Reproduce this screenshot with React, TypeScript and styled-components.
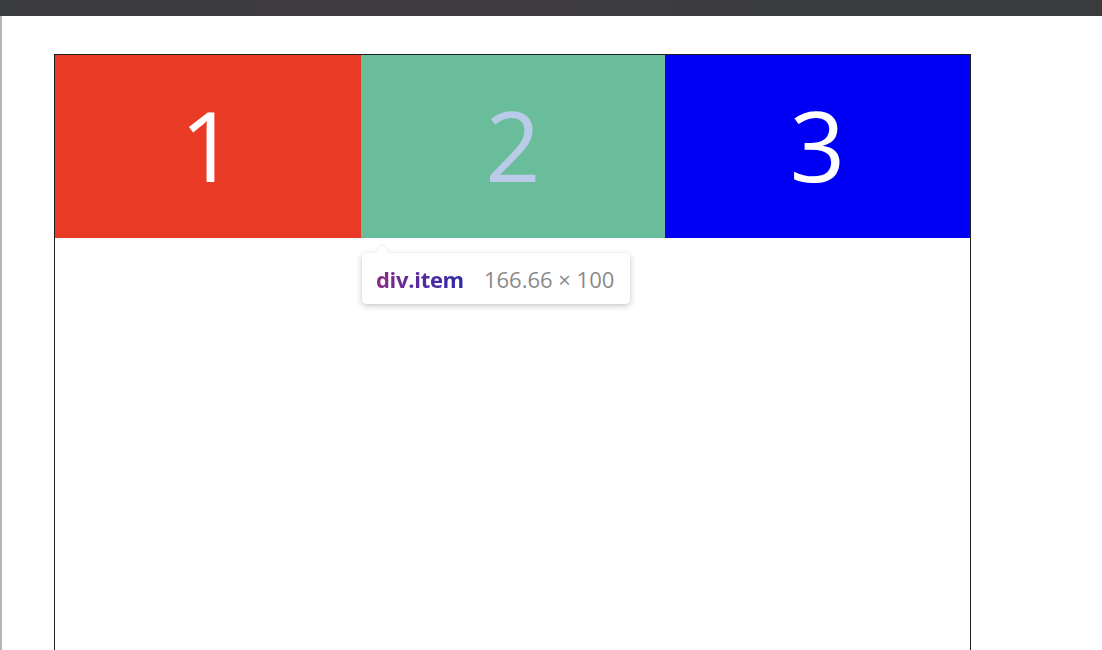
import React from "react";
import styled, { createGlobalStyle } from "styled-components";

const Global = createGlobalStyle`
  html, body { margin: 0; padding: 0; background: #ffffff; }
  body { font-family: "Open Sans", "Noto Sans", sans-serif; overflow: hidden; }
`;

const Page = styled.div`
  width: 1102px;
  height: 650px;
  display: flex;
  flex-direction: column;
  background: #ffffff;
`;

const TopBar = styled.div`
  height: 16px;
  flex: none;
  background: linear-gradient(90deg, #3a3b3d 0%, #403c40 40%, #3b3c3e 70%, #3a3b3c 100%);
  box-shadow: 0 1px 1px rgba(0, 0, 0, 0.25);
`;

const Viewport = styled.div`
  flex: 1;
  position: relative;
  border-left: 2px solid #b4b4b8;
  padding: 38px 0 0 52px;
  background: #ffffff;
`;

const Container = styled.div`
  width: 915px;
  height: 620px;
  border: 1px solid #1e1e1e;
  display: flex;
  align-items: flex-start;
`;

const Item = styled.div<{ $bg: string; $fg: string; $w: number }>`
  width: ${(p) => p.$w}px;
  height: 183px;
  flex: none;
  background: ${(p) => p.$bg};
  color: ${(p) => p.$fg};
  display: flex;
  align-items: center;
  justify-content: center;
  font-family: "Open Sans", "Noto Sans", sans-serif;
  font-size: 97px;
  font-weight: 400;
  line-height: 1;
  padding-bottom: 4px;
  box-sizing: border-box;
`;

const Tooltip = styled.div`
  position: absolute;
  left: 360px;
  top: 237px;
  height: 51px;
  padding: 0 16px 0 14px;
  display: flex;
  align-items: center;
  gap: 20px;
  background: #ffffff;
  border-radius: 4px;
  box-shadow: 0 2px 6px rgba(0, 0, 0, 0.22), 0 0 1px rgba(0, 0, 0, 0.15);
  font-family: "Open Sans", "Noto Sans", sans-serif;
  font-size: 22px;
  &::before {
    content: "";
    position: absolute;
    left: 12px;
    top: -8px;
    width: 0;
    height: 0;
    border-left: 8px solid transparent;
    border-right: 8px solid transparent;
    border-bottom: 8px solid #ffffff;
    filter: drop-shadow(0 -1px 1px rgba(0, 0, 0, 0.08));
  }
`;

const TagName = styled.span`
  font-weight: 700;
  letter-spacing: -0.3px;
  background: linear-gradient(90deg, #8a2a86 0%, #5b2a9c 45%, #2c2aa8 100%);
  -webkit-background-clip: text;
  background-clip: text;
  color: transparent;
`;

const Dims = styled.span`
  color: #8a8a8a;
`;

export default function App() {
  return (
    <Page>
      <Global />
      <TopBar />
      <Viewport>
        <Container>
          <Item $bg="#e83a24" $fg="#ffffff" $w={306}>1</Item>
          <Item $bg="#69bd9b" $fg="#b9cbe8" $w={304}>2</Item>
          <Item $bg="#0000f5" $fg="#ffffff" $w={305}>3</Item>
        </Container>
        <Tooltip>
          <TagName>div.item</TagName>
          <Dims>166.66 × 100</Dims>
        </Tooltip>
      </Viewport>
    </Page>
  );
}
